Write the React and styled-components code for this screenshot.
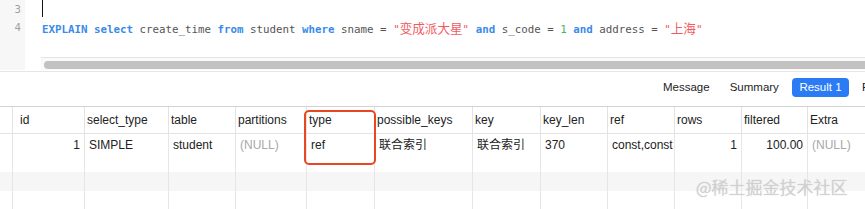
import React from 'react';
import styled, { createGlobalStyle } from 'styled-components';

const GlobalStyle = createGlobalStyle`
  html, body {
    margin: 0;
    padding: 0;
    background: #fff;
    overflow: hidden;
  }
  #root {
    width: 865px;
    height: 209px;
  }
`;

const Page = styled.div`
  position: relative;
  width: 865px;
  height: 209px;
  overflow: hidden;
  font-family: 'Liberation Sans', 'Noto Sans CJK SC', sans-serif;
`;

const Editor = styled.div`
  display: flex;
  height: 71px;
  border-bottom: 1px solid #e6e6e6;
`;

const Gutter = styled.div`
  width: 25px;
  flex-shrink: 0;
  background: #f7f7f7;
  padding: 1px 4px 0 0;
  box-sizing: border-box;
  text-align: right;
  font-family: 'DejaVu Sans Mono', monospace;
  font-size: 10.7px;
  line-height: 18px;
  color: #a0a0a0;
  height: 70px;
`;

const CodeArea = styled.div`
  flex: 1;
  display: flex;
  flex-direction: column;
  min-width: 0;
`;

const Line = styled.div`
  position: relative;
  height: 18px;
  line-height: 19px;
  padding-left: 17px;
  white-space: pre;
  font-family: 'DejaVu Sans Mono', 'Noto Sans CJK SC', monospace;
  font-size: 10.8px;
  color: #555;
`;

const Cursor = styled.span`
  display: inline-block;
  width: 1px;
  height: 17px;
  background: #111;
  vertical-align: top;
`;

const Kw = styled.span`
  color: #3a8bea;
  font-weight: bold;
`;

const Str = styled.span`
  color: #f05a62;
`;

const Cjk = styled.span`
  font-family: 'Noto Sans CJK SC', sans-serif;
  font-size: 12.6px;
`;

const Num = styled.span`
  color: #45b85a;
`;

const Spacer = styled.div`
  flex: 1;
`;

const ScrollTrack = styled.div`
  margin-left: 16px;
  height: 13px;
  border-top: 1px solid #e4e4e4;
  background: #fafafa;
  box-sizing: border-box;
  padding: 3px 0 0 3px;
  margin-bottom: 1px;
`;

const ScrollThumb = styled.div`
  height: 8px;
  border-radius: 4px;
  background: #c2c2c2;
  margin-right: -10px;
`;

const Toolbar = styled.div`
  display: flex;
  align-items: flex-start;
  height: 34px;
  padding: 6px 0 0 653px;
  box-sizing: border-box;
  white-space: nowrap;
  font-size: 11.5px;
`;

const Tab = styled.div`
  height: 19px;
  line-height: 19px;
  padding: 0 ${(p) => (p.active ? '7.5px' : '10px')};
  margin: 0 ${(p) => (p.active ? '3px' : '0')};
  border-radius: 4px;
  background: ${(p) => (p.active ? '#2b7bf4' : 'transparent')};
  color: ${(p) => (p.active ? '#fff' : '#1e1e1e')};
  flex-shrink: 0;
`;

const widths = [13, 72, 84, 67, 71, 68, 98, 68, 67, 67, 67, 66, 70];

const Table = styled.div`
  position: relative;
  width: 878px;
  border-top: 1px solid #d2d2d2;
`;

const Row = styled.div`
  display: grid;
  grid-template-columns: ${widths.map((w) => `${w}px`).join(' ')};
  height: ${(p) => p.h}px;
  background: ${(p) => (p.striped ? '#f6f6f6' : '#fff')};
  border-bottom: ${(p) => (p.head ? '1px solid #e3e3e3' : 'none')};
`;

const HeadCell = styled.div`
  box-sizing: border-box;
  border-right: 1px solid #e2e2e2;
  padding: 0 2px 0 ${(p) => (p.first ? '7px' : '2px')};
  font-size: 12px;
  line-height: 26px;
  color: #222;
  white-space: nowrap;
  overflow: hidden;
`;

const Cell = styled.div`
  box-sizing: border-box;
  border-right: 1px solid #e6e6e6;
  padding: 4px 4px 0;
  font-size: 12px;
  line-height: 14px;
  white-space: nowrap;
  overflow: hidden;
  text-align: ${(p) => (p.right ? 'right' : 'left')};
  color: ${(p) => (p.muted ? '#a8a8a8' : '#222')};
`;

const Highlight = styled.div`
  position: absolute;
  left: 304px;
  top: 3px;
  width: 72px;
  height: 55px;
  box-sizing: border-box;
  border: 2.5px solid #e9471f;
  border-radius: 5px;
  pointer-events: none;
`;

const Watermark = styled.div`
  position: absolute;
  left: 696px;
  top: 177px;
  font-family: 'Noto Sans CJK SC', sans-serif;
  font-size: 17px;
  font-weight: 300;
  line-height: 20px;
  color: #d2d2d2;
  text-shadow: 0 0 1px #b4b4b4;
  white-space: nowrap;
`;

const headers = [
  '', 'id', 'select_type', 'table', 'partitions', 'type', 'possible_keys',
  'key', 'key_len', 'ref', 'rows', 'filtered', 'Extra',
];

const dataRow = [
  { v: '' },
  { v: '1', right: true },
  { v: 'SIMPLE' },
  { v: 'student' },
  { v: '(NULL)', muted: true },
  { v: 'ref' },
  { v: '联合索引' },
  { v: '联合索引' },
  { v: '370' },
  { v: 'const,const' },
  { v: '1', right: true },
  { v: '100.00', right: true },
  { v: '(NULL)', muted: true },
];

const emptyRows = [false, true, false];

const App = () => (
  <Page>
    <GlobalStyle />
    <Editor>
      <Gutter>
        <div>3</div>
        <div>4</div>
      </Gutter>
      <CodeArea>
        <Line>
          <Cursor />
        </Line>
        <Line>
          <Kw>EXPLAIN</Kw> <Kw>select</Kw> create_time <Kw>from</Kw> student <Kw>where</Kw> sname = <Str>"<Cjk>变成派大星</Cjk>"</Str> <Kw>and</Kw> s_code = <Num>1</Num> <Kw>and</Kw> address = <Str>"<Cjk>上海</Cjk>"</Str>
        </Line>
        <Spacer />
        <ScrollTrack>
          <ScrollThumb />
        </ScrollTrack>
      </CodeArea>
    </Editor>
    <Toolbar>
      <Tab>Message</Tab>
      <Tab>Summary</Tab>
      <Tab active>Result 1</Tab>
      <Tab>Profile</Tab>
    </Toolbar>
    <Table>
      <Row head h={26}>
        {headers.map((h, i) => (
          <HeadCell key={i} first={i === 1}>{h}</HeadCell>
        ))}
      </Row>
      <Row h={19}>
        {dataRow.map((c, i) => (
          <Cell key={i} right={c.right} muted={c.muted}>{c.v}</Cell>
        ))}
      </Row>
      {emptyRows.map((striped, r) => (
        <Row key={r} h={19} striped={striped}>
          {widths.map((_, i) => (
            <Cell key={i} />
          ))}
        </Row>
      ))}
      <Highlight />
    </Table>
    <Watermark>@稀土掘金技术社区</Watermark>
  </Page>
);

export default App;
